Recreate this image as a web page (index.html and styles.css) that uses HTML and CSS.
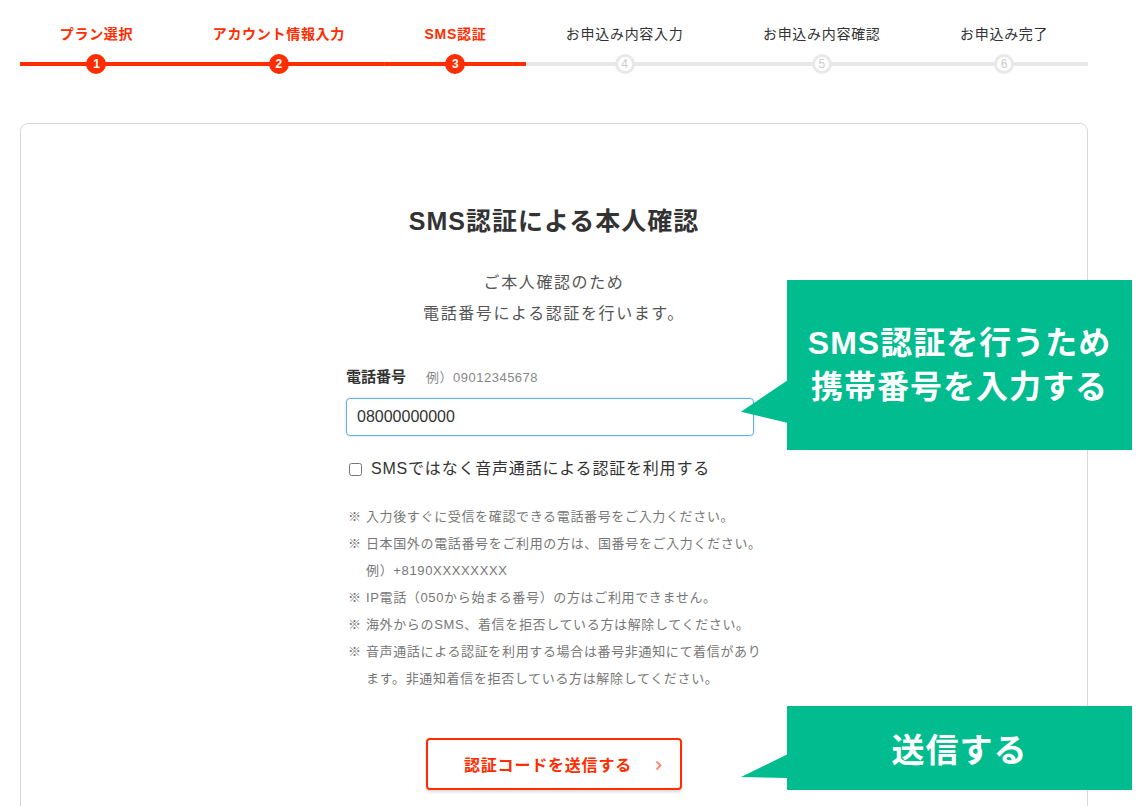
FILE: index.html
```html
<html>
<head>
    <title>SMS認証</title>
    <link rel="stylesheet" href="styles.css">
</head>
<body>
    <ol class="steps">
        <li class="step step-done"><span class="step-label">プラン選択</span><span class="step-track"><span class="step-num">1</span></span></li>
        <li class="step step-done"><span class="step-label">アカウント情報入力</span><span class="step-track"><span class="step-num">2</span></span></li>
        <li class="step step-done"><span class="step-label">SMS認証</span><span class="step-track"><span class="step-num">3</span></span></li>
        <li class="step"><span class="step-label">お申込み内容入力</span><span class="step-track"><span class="step-num">4</span></span></li>
        <li class="step"><span class="step-label">お申込み内容確認</span><span class="step-track"><span class="step-num">5</span></span></li>
        <li class="step"><span class="step-label">お申込み完了</span><span class="step-track"><span class="step-num">6</span></span></li>
    </ol>

    <div class="card">
        <h1 class="title">SMS認証による本人確認</h1>
        <p class="lead">ご本人確認のため<br>電話番号による認証を行います。</p>

        <div class="form">
            <div class="field-label">電話番号<span class="field-hint">例）09012345678</span></div>
            <input type="text" class="field-input" value="08000000000">

            <label class="check">
                <input type="checkbox">
                <span>SMSではなく音声通話による認証を利用する</span>
            </label>

            <ul class="notes">
                <li>※ 入力後すぐに受信を確認できる電話番号をご入力ください。</li>
                <li>※ 日本国外の電話番号をご利用の方は、国番号をご入力ください。<br>例）+8190XXXXXXXX</li>
                <li>※ IP電話（050から始まる番号）の方はご利用できません。</li>
                <li>※ 海外からのSMS、着信を拒否している方は解除してください。</li>
                <li>※ 音声通話による認証を利用する場合は番号非通知にて着信があり<br>ます。非通知着信を拒否している方は解除してください。</li>
            </ul>
        </div>

        <div class="actions">
            <button class="send-button">認証コードを送信する
                <svg class="chevron" width="7" height="11" viewBox="0 0 7 11"><polyline points="1.5,1.5 5.5,5.5 1.5,9.5" fill="none" stroke="#ff8c78" stroke-width="2"/></svg>
            </button>
        </div>
    </div>

    <div class="callout callout-phone">SMS認証を行うため<br>携帯番号を入力する</div>
    <div class="callout callout-send">送信する</div>
</body>
</html>
```

FILE: styles.css
```css
body {
    margin: 0;
    background-color: #fff;
    color: #333;
    font-family: "Liberation Sans", "Noto Sans CJK JP", sans-serif;
}
.steps {
    display: flex;
    list-style: none;
    margin: 0 53px 0 20px;
    padding: 24px 0 0;
}
.step {
    flex: 1 1 auto;
    display: flex;
    flex-direction: column;
    align-items: center;
}
.step-label {
    font-size: 14px;
    line-height: 20px;
    letter-spacing: 0.05em;
    white-space: nowrap;
    color: #333;
}
.step-done .step-label {
    color: #ff2d00;
    font-weight: bold;
}
.step-track {
    align-self: stretch;
    height: 20px;
    margin-top: 10px;
    display: flex;
    justify-content: center;
    background: linear-gradient(#e8e8e8, #e8e8e8) center / 100% 4px no-repeat;
}
.step-done .step-track {
    background-image: linear-gradient(#ff2d00, #ff2d00);
}
.step-num {
    width: 14px;
    height: 14px;
    border: 3px solid #e8e8e8;
    border-radius: 50%;
    background-color: #fff;
    color: #ccc;
    font-size: 12px;
    line-height: 14px;
    text-align: center;
}
.step-done .step-num {
    border-color: #ff2d00;
    background-color: #ff2d00;
    color: #fff;
    font-weight: bold;
}
.card {
    margin: 49px 53px 0 20px;
    padding: 80px 0 120px;
    border: 1px solid #d8d8d8;
    border-radius: 8px;
    text-align: center;
}
.title {
    margin: 0;
    font-size: 25px;
    line-height: 34px;
    letter-spacing: 1px;
    font-weight: bold;
    color: #333;
}
.lead {
    margin: 29px 0 0;
    font-size: 16px;
    line-height: 31px;
    letter-spacing: 0.1em;
    color: #555;
}
.form {
    width: 416px;
    margin: 37px auto 0;
    text-align: left;
}
.field-label {
    font-size: 15px;
    line-height: 22px;
    font-weight: bold;
    color: #333;
}
.field-hint {
    margin-left: 20px;
    font-size: 13px;
    letter-spacing: 0.5px;
    font-weight: normal;
    color: #888;
}
.field-input {
    display: block;
    width: 408px;
    height: 38px;
    margin-top: 9px;
    padding: 0 10px;
    box-sizing: border-box;
    border: 1px solid #66afe9;
    border-radius: 4px;
    box-shadow: 0 0 3px rgba(102, 175, 233, 0.4);
    font-family: inherit;
    font-size: 16px;
    color: #333;
}
.check {
    display: flex;
    align-items: center;
    margin-top: 21px;
    padding-left: 3px;
    font-size: 16px;
    line-height: 24px;
    letter-spacing: 0.05em;
    color: #333;
}
.check input {
    margin: 0 9px 0 0;
}
.notes {
    list-style: none;
    margin: 22px 0 0;
    padding: 0 0 0 2px;
    font-size: 13px;
    line-height: 27px;
    letter-spacing: 0.05em;
    color: #777;
}
.notes li {
    padding-left: 18px;
    text-indent: -18px;
    white-space: nowrap;
}
.actions {
    margin-top: 46px;
}
.send-button {
    position: relative;
    width: 256px;
    height: 52px;
    border: 2px solid #ff2d00;
    border-radius: 4px;
    background-color: #fff;
    box-shadow: 0 2px 3px rgba(0, 0, 0, 0.15);
    font-family: inherit;
    font-size: 16px;
    font-weight: bold;
    letter-spacing: 0.05em;
    color: #ff2d00;
    padding: 0 12px 0 0;
    cursor: pointer;
}
.chevron {
    position: absolute;
    right: 18px;
    top: 20px;
}
.callout {
    position: absolute;
    left: 787px;
    width: 345px;
    display: flex;
    align-items: center;
    justify-content: center;
    text-align: center;
    background-color: #00bc8f;
    color: #fff;
    font-weight: bold;
    letter-spacing: 1px;
}
.callout::before {
    content: "";
    position: absolute;
    left: -46px;
    width: 47px;
    background-color: #00bc8f;
}
.callout-phone {
    top: 280px;
    height: 170px;
    font-size: 32px;
    line-height: 44px;
}
.callout-phone::before {
    top: 100px;
    height: 43px;
    clip-path: polygon(100% 0, 0 74%, 100% 100%);
}
.callout-send {
    top: 706px;
    height: 84px;
    font-size: 33px;
}
.callout-send::before {
    top: 48px;
    height: 24px;
    clip-path: polygon(100% 0, 0 96%, 100% 100%);
}
```
